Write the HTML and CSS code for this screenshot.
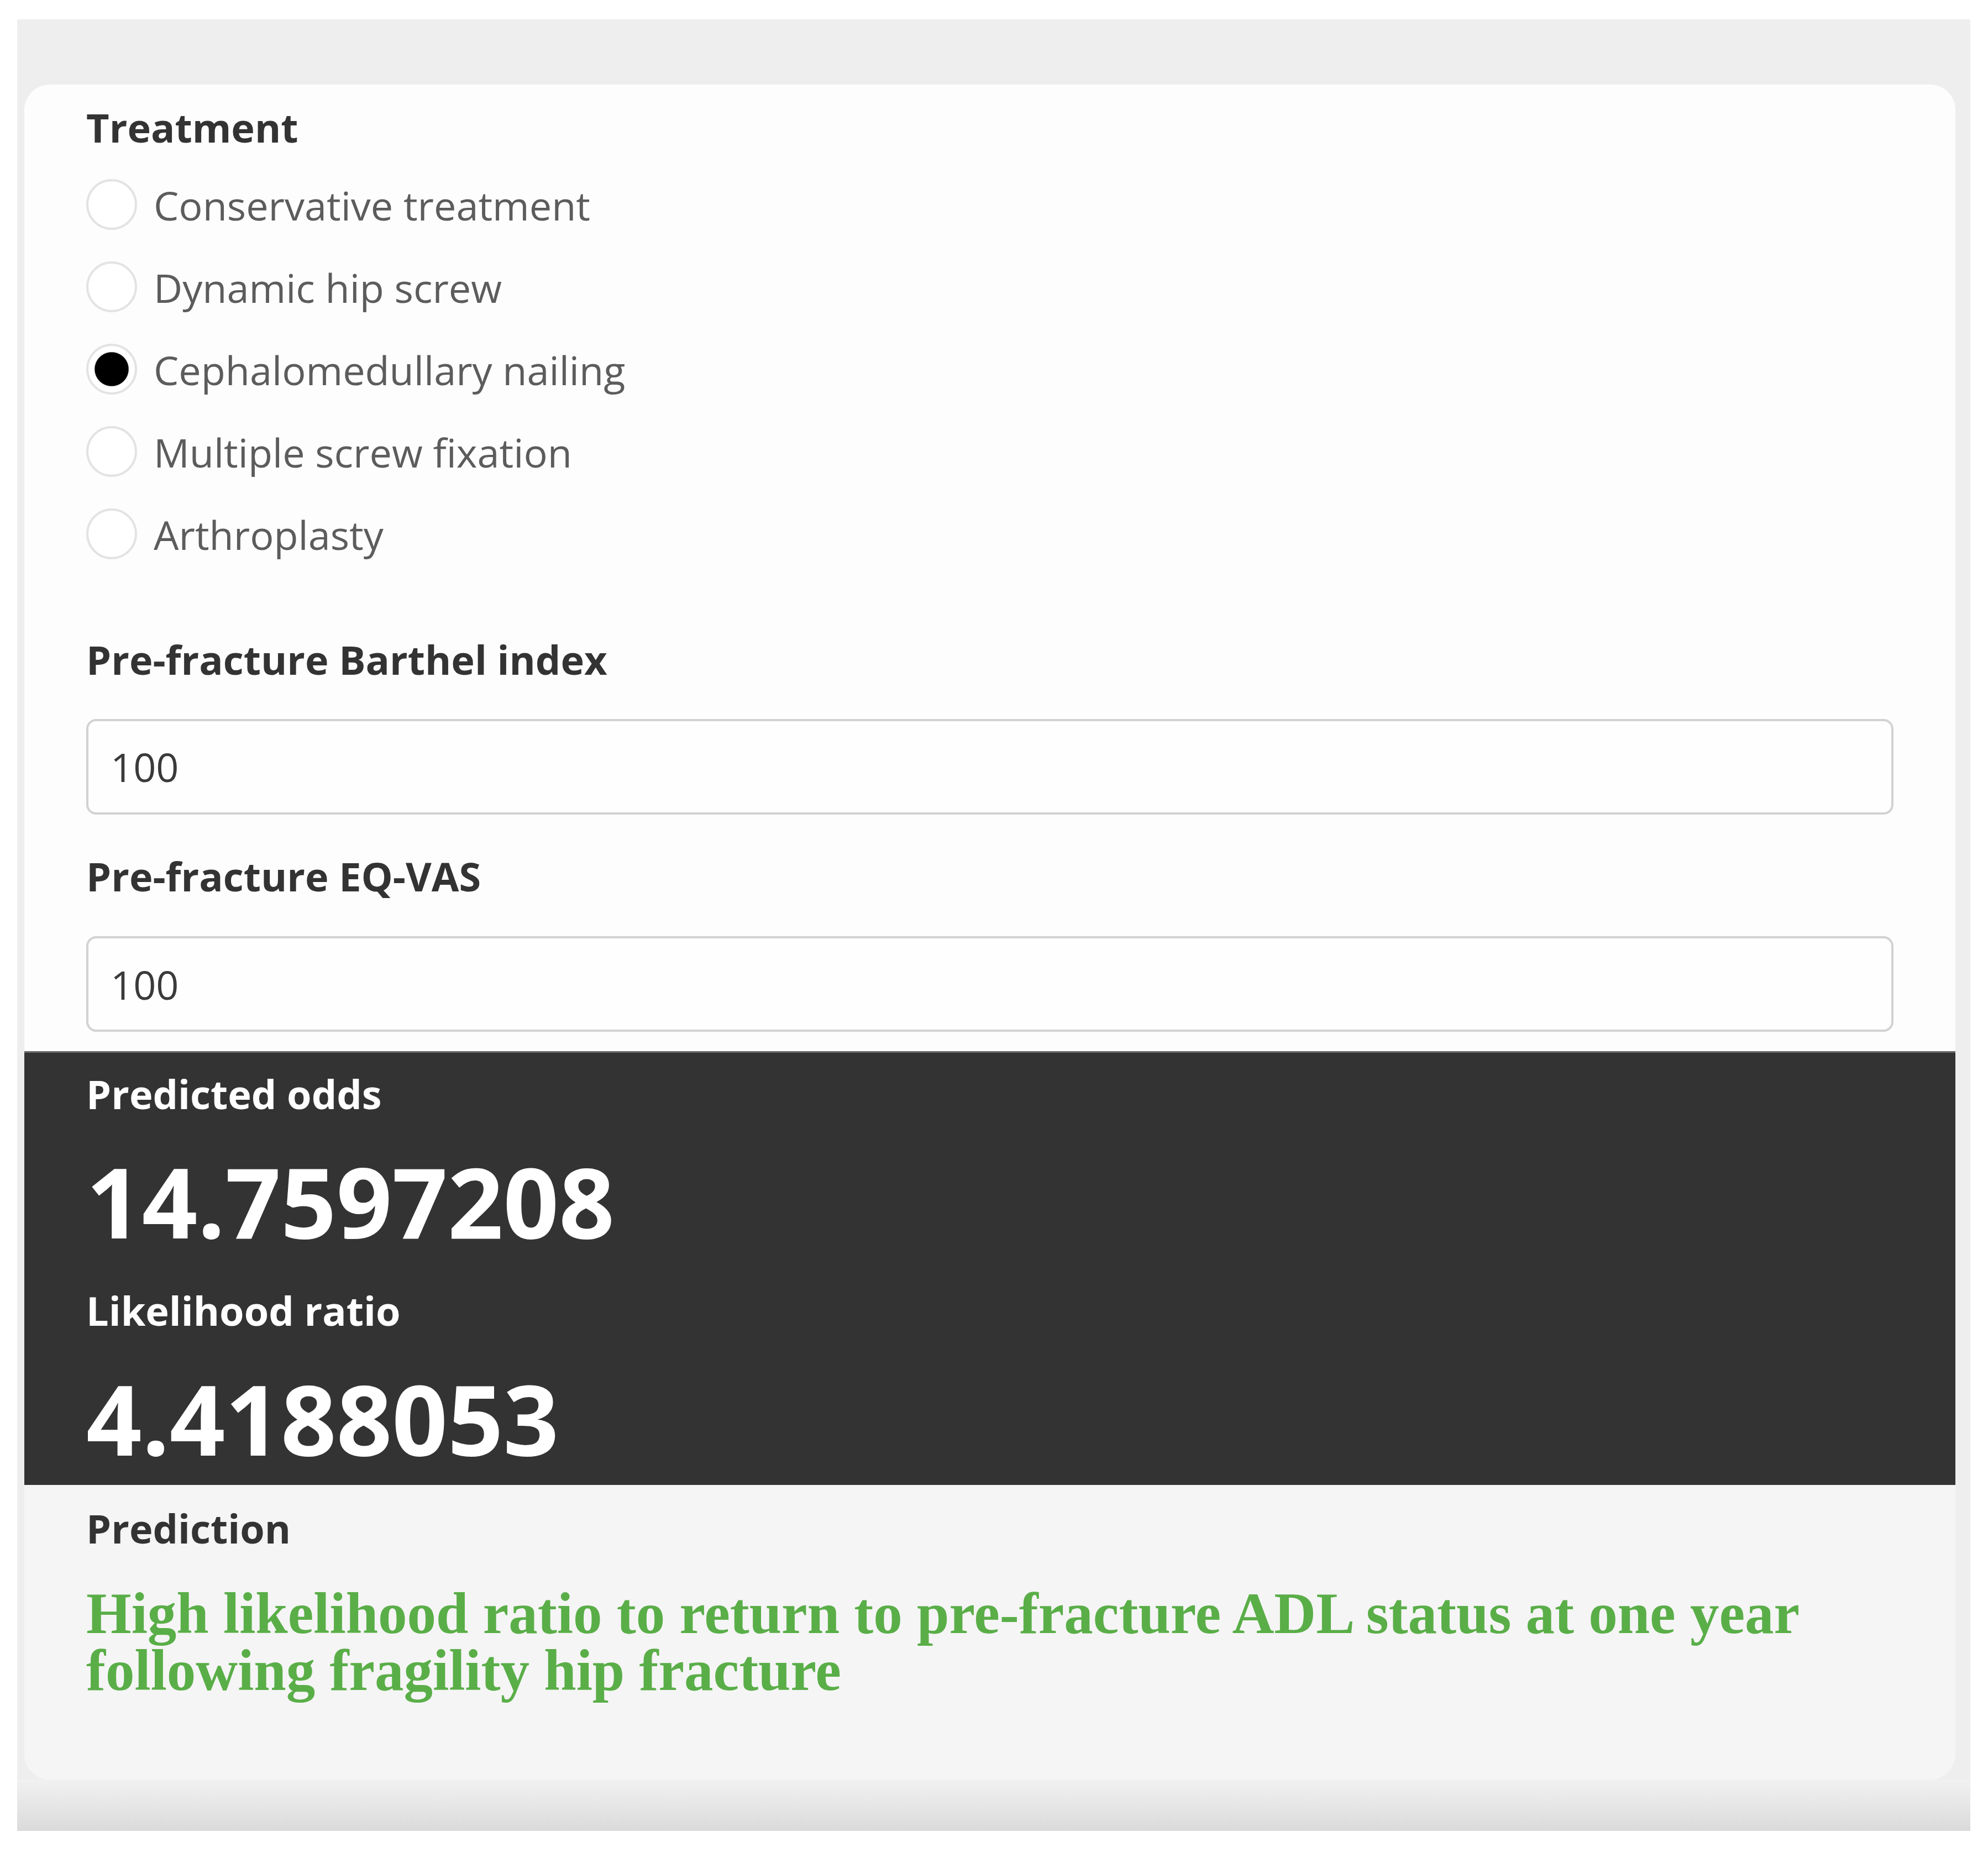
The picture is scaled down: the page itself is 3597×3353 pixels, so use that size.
FILE: index.html
```html
<!DOCTYPE html>
<html lang="en">
<head>
<meta charset="utf-8">
<title>Prediction tool</title>
<link rel="stylesheet" href="styles.css">
</head>
<body>
<div class="frame">
  <div class="card">
    <div class="form">
      <div class="label label-treatment">Treatment</div>
      <div class="radios">
        <label class="radio-row"><input class="radio" type="radio" name="treatment"><span class="radio-text">Conservative treatment</span></label>
        <label class="radio-row"><input class="radio" type="radio" name="treatment"><span class="radio-text">Dynamic hip screw</span></label>
        <label class="radio-row"><input class="radio" type="radio" name="treatment" checked><span class="radio-text">Cephalomedullary nailing</span></label>
        <label class="radio-row"><input class="radio" type="radio" name="treatment"><span class="radio-text">Multiple screw fixation</span></label>
        <label class="radio-row"><input class="radio" type="radio" name="treatment"><span class="radio-text">Arthroplasty</span></label>
      </div>
      <div class="label label-barthel">Pre-fracture Barthel index</div>
      <input class="field" type="text" value="100">
      <div class="label label-eq">Pre-fracture EQ-VAS</div>
      <input class="field" type="text" value="100">
    </div>
    <div class="dark">
      <div class="label label-white">Predicted odds</div>
      <div class="big big-first">14.7597208</div>
      <div class="label label-white label-lr">Likelihood ratio</div>
      <div class="big big-second">4.4188053</div>
    </div>
    <div class="well">
      <div class="label">Prediction</div>
      <div class="result">High likelihood ratio to return to pre-fracture ADL status at one year following fragility hip fracture</div>
    </div>
  </div>
</div>
</body>
</html>
```

FILE: styles.css
```css
html, body {
  margin: 0;
  padding: 0;
  background: #ffffff;
}

body {
  font-family: "Open Sans", "Liberation Sans", sans-serif;
}

.frame {
  margin: 35px 32px 40px 31px;
  height: 3278px;
  box-sizing: border-box;
  padding: 118px 27px 93px 13px;
  background:
    linear-gradient(#eeeeee, #eeeeee) top left / 100% calc(100% - 93px) no-repeat,
    linear-gradient(to bottom, #f1f1f1 0%, #e6e6e6 50%, #dadada 100%) bottom left / 100% 93px no-repeat;
}

.card {
  height: 100%;
  background: #fdfdfd;
  border-radius: 46px;
  overflow: hidden;
  display: flex;
  flex-direction: column;
}

.form {
  padding: 34px 112px 35px 112px;
  display: flex;
  flex-direction: column;
}

.label {
  font-size: 72px;
  line-height: 86.4px;
  font-weight: 700;
  color: #333333;
}

.radios {
  margin-top: 24px;
  display: flex;
  flex-direction: column;
}

.radio-row {
  height: 149px;
  display: flex;
  align-items: center;
  gap: 30px;
  cursor: pointer;
}

.radio {
  -webkit-appearance: none;
  appearance: none;
  margin: 0;
  width: 92px;
  height: 92px;
  flex: 0 0 92px;
  box-sizing: border-box;
  border: 4px solid #e3e3e3;
  border-radius: 50%;
  background: #ffffff;
  position: relative;
  top: -2px;
}

.radio:checked {
  background: radial-gradient(circle at center, #000000 0, #000000 30px, #ffffff 31.5px);
}

.radio-text {
  font-size: 72px;
  line-height: 86.4px;
  color: #5c5c5c;
  position: relative;
  top: -1px;
}

.label-barthel {
  margin-top: 108px;
}

.label-eq {
  margin-top: 68px;
}

.field {
  display: block;
  box-sizing: border-box;
  width: 100%;
  height: 173px;
  margin: 64px 0 0 0;
  padding: 0 40px;
  border: 4px solid #d2d2d2;
  border-radius: 18px;
  background: #fefefe;
  font-family: "Open Sans", "Liberation Sans", sans-serif;
  font-size: 72px;
  color: #3a3a3a;
  outline: none;
}

.label-eq + .field {
  margin-top: 66px;
}

.dark {
  background: #333333;
  border-top: 3px solid #6a6a6a;
  height: 782px;
  box-sizing: content-box;
  padding: 31px 112px 0 112px;
  display: flex;
  flex-direction: column;
  box-sizing: border-box;
  height: 785px;
}

.label-white {
  color: #ffffff;
}

.big {
  font-size: 176px;
  line-height: 193.6px;
  font-weight: 700;
  color: #ffffff;
}

.big-first {
  margin-top: 54px;
}

.label-lr {
  margin-top: 58px;
}

.big-second {
  margin-top: 55px;
}

.well {
  flex: 1;
  background: #f5f5f5;
  padding: 35px 112px 0 112px;
}

.result {
  margin-top: 59px;
  font-family: "Liberation Serif", "Times New Roman", serif;
  font-weight: 700;
  font-size: 105px;
  line-height: 103px;
  color: #5aae48;
}
```
